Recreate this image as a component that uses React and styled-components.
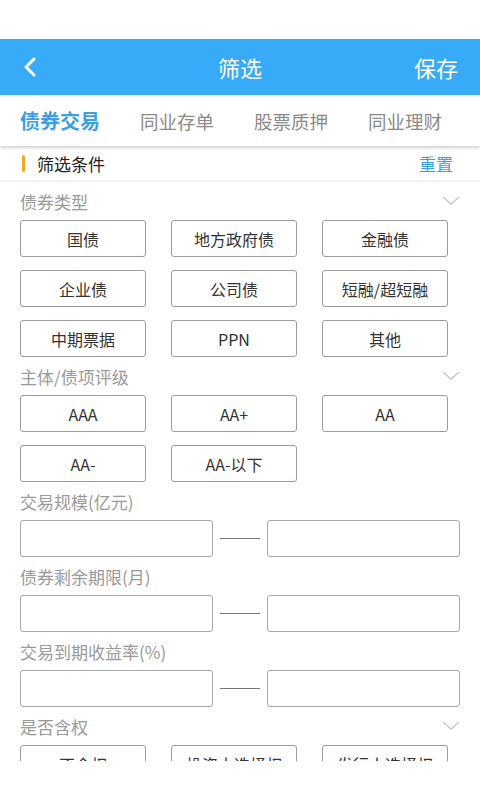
import React from 'react'
import styled, { createGlobalStyle } from 'styled-components'

const Global = createGlobalStyle`
  html, body { margin: 0; padding: 0; background: #fff; }
  body { font-family: "Noto Sans CJK SC", "Noto Sans", sans-serif; }
  * { box-sizing: border-box; }
`

const Page = styled.div`
  width: 480px;
  height: 800px;
  display: flex;
  flex-direction: column;
  background: #fff;
  overflow: hidden;
`
const StatusBar = styled.div`
  height: 39px;
  background: #fff;
  flex-shrink: 0;
`
const Header = styled.div`
  height: 56px;
  flex-shrink: 0;
  background: #37abf7;
  display: grid;
  grid-template-columns: 80px 1fr 80px;
  align-items: center;
  color: #fff;
`
const Back = styled.div`
  padding-left: 23px;
  display: flex;
  align-items: center;
`
const Title = styled.div`
  text-align: center;
  font-size: 22px;
`
const Save = styled.div`
  text-align: right;
  padding-right: 22px;
  font-size: 22px;
`
const Tabs = styled.div`
  height: 51px;
  flex-shrink: 0;
  display: flex;
  align-items: center;
  gap: 40px;
  padding: 0 0 0 20px;
  position: relative;
  z-index: 1;
  box-shadow: 0 2px 3px rgba(0, 0, 0, 0.18);
  background: #fff;
`
const Tab = styled.div`
  font-size: ${p => (p.active ? '20px' : '18.5px')};
  font-weight: ${p => (p.active ? 700 : 400)};
  color: ${p => (p.active ? '#3a9fe3' : '#8a8a8a')};
  white-space: nowrap;
`
const FilterHead = styled.div`
  height: 36px;
  flex-shrink: 0;
  display: flex;
  align-items: center;
  justify-content: space-between;
  padding: 0 27px 0 22px;
  border-bottom: 2px solid #eef2f6;
`
const HeadLeft = styled.div`
  display: flex;
  align-items: center;
  gap: 12px;
  font-size: 17px;
  color: #222;
`
const Bar = styled.span`
  width: 3px;
  height: 17px;
  border-radius: 2px;
  background: #f5a623;
`
const Reset = styled.div`
  font-size: 17px;
  color: #3a9fe3;
`
const Form = styled.div`
  height: 579px;
  overflow: hidden;
  padding: 0 20px;
  flex-shrink: 0;
`
const Footer = styled.div`
  flex: 1;
  background: #fff;
`
const Label = styled.div`
  height: 38px;
  display: flex;
  align-items: center;
  justify-content: space-between;
  font-size: 17px;
  color: #9a9a9a;
`
const Options = styled.div`
  display: grid;
  grid-template-columns: repeat(3, 126px);
  grid-auto-rows: 37px;
  column-gap: 25px;
  row-gap: 13px;
`
const Option = styled.div`
  border: 1px solid #9c9c9c;
  border-radius: 3px;
  display: flex;
  align-items: center;
  justify-content: center;
  font-size: 16px;
  color: #333;
  white-space: nowrap;
`
const Range = styled.div`
  display: grid;
  grid-template-columns: 1fr 40px 1fr;
  column-gap: 7px;
  align-items: center;
  height: 37px;
`
const Input = styled.div`
  height: 37px;
  border: 1px solid #a8a8a8;
  border-radius: 3px;
`
const Dash = styled.div`
  height: 1px;
  background: #777;
`

const Chevron = () => (
  <svg width="18" height="10" viewBox="0 0 18 10">
    <polyline points="1,1 9,8 17,1" fill="none" stroke="#c3c8ce" strokeWidth="1.4" />
  </svg>
)

const BackIcon = () => (
  <svg width="14" height="20" viewBox="0 0 14 20">
    <polyline points="11,2 3,10 11,18" fill="none" stroke="#fff" strokeWidth="3" strokeLinecap="round" strokeLinejoin="round" />
  </svg>
)

const Section = ({ title, fold, children }) => (
  <>
    <Label>
      <span>{title}</span>
      {fold && <Chevron />}
    </Label>
    {children}
  </>
)

const RangeRow = () => (
  <Range>
    <Input />
    <Dash />
    <Input />
  </Range>
)

const bondTypes = ['国债', '地方政府债', '金融债', '企业债', '公司债', '短融/超短融', '中期票据', 'PPN', '其他']
const ratings = ['AAA', 'AA+', 'AA', 'AA-', 'AA-以下']
const rights = ['不含权', '投资人选择权', '发行人选择权']

export default function App() {
  return (
    <Page>
      <Global />
      <StatusBar />
      <Header>
        <Back><BackIcon /></Back>
        <Title>筛选</Title>
        <Save>保存</Save>
      </Header>
      <Tabs>
        <Tab active>债券交易</Tab>
        <Tab>同业存单</Tab>
        <Tab>股票质押</Tab>
        <Tab>同业理财</Tab>
      </Tabs>
      <FilterHead>
        <HeadLeft><Bar />筛选条件</HeadLeft>
        <Reset>重置</Reset>
      </FilterHead>
      <Form>
        <Section title="债券类型" fold>
          <Options>
            {bondTypes.map(t => <Option key={t}>{t}</Option>)}
          </Options>
        </Section>
        <Section title="主体/债项评级" fold>
          <Options>
            {ratings.map(t => <Option key={t}>{t}</Option>)}
          </Options>
        </Section>
        <Section title="交易规模(亿元)">
          <RangeRow />
        </Section>
        <Section title="债券剩余期限(月)">
          <RangeRow />
        </Section>
        <Section title="交易到期收益率(%)">
          <RangeRow />
        </Section>
        <Section title="是否含权" fold>
          <Options>
            {rights.map(t => <Option key={t}>{t}</Option>)}
          </Options>
        </Section>
      </Form>
      <Footer />
    </Page>
  )
}
